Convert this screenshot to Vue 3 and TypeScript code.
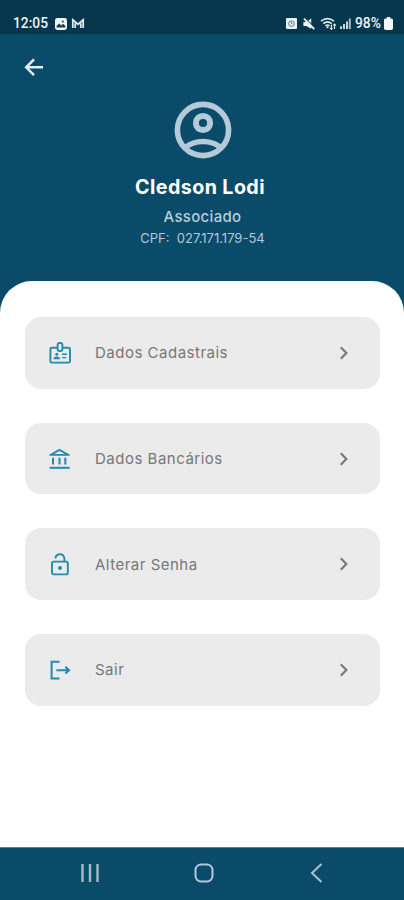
<script setup lang="ts">
type IconName = 'badge' | 'bank' | 'lock' | 'exit'

interface MenuItem {
  icon: IconName
  label: string
}

const items: MenuItem[] = [
  { icon: 'badge', label: 'Dados Cadastrais' },
  { icon: 'bank', label: 'Dados Bancários' },
  { icon: 'lock', label: 'Alterar Senha' },
  { icon: 'exit', label: 'Sair' },
]
</script>

<template>
  <div class="screen">
    <div class="status">
      <div class="status-left">
        <span class="time">12:05</span>
        <svg class="ic-image" viewBox="0 0 12 12" width="12" height="12">
          <rect width="12" height="12" rx="2.4" fill="#eef4f8" />
          <path d="M1.6 9.6V8l2.6-2.4 2 1.8 1.8-1.6 2.4 2.2v1.6z" fill="#153b50" />
          <circle cx="7.8" cy="3.4" r="1" fill="#153b50" />
        </svg>
        <svg class="ic-mail" viewBox="0 0 14 11" width="14" height="11">
          <path d="M1.8 10V1.8L7 6.2l5.2-4.4V10M4.2 10V5.2M9.8 10V5.2" fill="none" stroke="#dce7ee" stroke-width="1.8" />
        </svg>
      </div>
      <div class="status-right">
        <svg class="ic-alarm" viewBox="0 0 11 11" width="11" height="11">
          <rect width="11" height="11" rx="1" fill="#e9f1f5" />
          <circle cx="5.5" cy="5.7" r="2.8" fill="none" stroke="#4d6a7a" stroke-width=".9" />
          <path d="M5.5 4.2v1.7h1.2" fill="none" stroke="#4d6a7a" stroke-width=".8" />
        </svg>
        <svg class="ic-mute" viewBox="0 0 12 12" width="12" height="12">
          <path d="M.4 4h2.900L8.200.6v10.200L3.300 8H.4z" fill="#eef4f8" />
          <path d="M2.800.9l9 9" stroke="#06364b" stroke-width="1.100" />
          <path d="M1 .7l10.300 10.400" stroke="#eef4f8" stroke-width="1.900" />
        </svg>
        <svg class="ic-wifi" viewBox="0 0 17 13" width="17" height="13">
          <path d="M1 4.200Q7.500-1 14 4.200M3.200 6.600q4.300-3.400 8.600 0M5.400 8.800q2.100-1.600 4.200 0" fill="none" stroke="#dce7ee" stroke-width="1.600" />
          <circle cx="7.500" cy="10.200" r="1.100" fill="#dce7ee" />
          <path d="M11.500 7.500v4.800M10 10.800l1.500 1.500 1-1M14.500 12V7M13.400 8.400l1.100-1.200 1.300 1.300" fill="none" stroke="#dce7ee" stroke-width="1.200" />
        </svg>
        <svg class="ic-signal" viewBox="0 0 11 11" width="11" height="11">
          <path d="M1 11V8.300M4 11V6M7 11V3.500" stroke="#c9d6de" stroke-width="2" />
          <path d="M9.800 11V.5" stroke="#a8bac5" stroke-width="2" />
        </svg>
        <span class="pct">98%</span>
        <svg class="ic-bat" viewBox="0 0 9 13" width="9" height="13">
          <path d="M2.800 0h3.400v1.500H7.600Q9 1.500 9 3v8.300Q9 13 7.400 13H1.600Q0 13 0 11.300V3q0-1.500 1.400-1.500h1.400z" fill="#f4f8fa" />
        </svg>
      </div>
    </div>

    <header class="header">
      <svg class="back" viewBox="0 0 20 20" width="20" height="20">
        <path d="M19 10.300H2.800M10 2.400L2.200 10.300 10 18.200" fill="none" stroke="#e6f0f7" stroke-width="2.500" />
      </svg>
      <svg class="avatar" viewBox="0 0 58 58" width="58" height="58">
        <g fill="none" stroke="#b4cad8">
          <circle cx="29" cy="29" r="25.600" stroke-width="5.600" />
          <circle cx="29" cy="22" r="7.100" stroke-width="6" />
          <path d="M11 46.500Q19 40.500 29 40.500T47 46.500" stroke-width="5.400" />
        </g>
      </svg>
      <h1 class="name">Cledson Lodi</h1>
      <p class="role">Associado</p>
      <p class="cpf">CPF:&nbsp; 027.171.179-54</p>
    </header>

    <main class="sheet">
      <button v-for="item in items" :key="item.label" class="card" type="button">
        <svg class="icon" viewBox="0 0 24 24" width="24" height="24" fill="none" stroke="#2589b0" stroke-width="1.900">
          <template v-if="item.icon === 'badge'">
            <path d="M9.600 6.800H3.800Q2.400 6.800 2.400 8.200v12q0 1.400 1.400 1.400h16.800q1.400 0 1.400-1.400v-12q0-1.400-1.400-1.400h-6.200" />
            <rect x="9.600" y="2" width="4.800" height="8" rx="2" />
            <circle cx="8.800" cy="13.200" r="1.500" fill="#2589b0" stroke="none" />
            <path d="M5.600 18.200q0-2.600 3.200-2.600t3.200 2.600z" fill="#2589b0" stroke="none" />
            <path d="M14 13.300h5M14 16.600h4.200" stroke-width="1.400" />
          </template>
          <template v-else-if="item.icon === 'bank'">
            <path d="M1.400 8.800V7.500L11.500 1.800 21.600 7.500v1.300zM6.200 7.100h10.600L11.500 4z" fill="#2589b0" fill-rule="evenodd" stroke="none" />
            <path d="M5 10.800v6.800M11.500 10.800v6.800M17.300 10.800v6.800" stroke-width="2" />
            <path d="M1.600 20.800h20" stroke-width="2" />
          </template>
          <template v-else-if="item.icon === 'lock'">
            <rect x="4" y="9.600" width="15.800" height="12.800" rx="1.700" />
            <path d="M7.500 6.600V6Q8 2.200 11.900 2.200T16.400 6.500v3" />
            <circle cx="12" cy="16" r="2" fill="#2589b0" stroke="none" />
          </template>
          <template v-else>
            <path d="M11.500 3.800H3.600v16.800h7.900" stroke-width="2" />
            <path d="M8.400 12.200h12M17.400 8.800l3.500 3.400-3.500 3.400" stroke-width="2.100" />
          </template>
        </svg>
        <span class="label">{{ item.label }}</span>
        <svg class="chev" viewBox="0 0 10 14" width="10" height="14">
          <path d="M1.800 1.300L7.400 7l-5.600 5.700" fill="none" stroke="#777" stroke-width="2.100" />
        </svg>
      </button>
    </main>

    <nav class="nav">
      <svg viewBox="0 0 20 20" width="20" height="20">
        <path d="M2.500 1v18M10 1v18M17.500 1v18" stroke="#a3bac9" stroke-width="2.400" />
      </svg>
      <svg viewBox="0 0 20 20" width="20" height="20">
        <rect x="1.500" y="1.500" width="17" height="17" rx="5.500" fill="none" stroke="#b3c7df" stroke-width="2" />
      </svg>
      <svg viewBox="0 0 20 20" width="20" height="20">
        <path d="M14.500 1L5 10l9.500 9" fill="none" stroke="#a9c0d6" stroke-width="2" />
      </svg>
    </nav>
  </div>
</template>

<style>
body {
  margin: 0;
}
</style>

<style scoped>
.screen {
  width: 404px;
  height: 900px;
  display: flex;
  flex-direction: column;
  overflow: hidden;
  background: #0a4b6a;
  font-family: Inter, "Liberation Sans", sans-serif;
}
svg {
  display: block;
  flex: none;
}
.status {
  box-sizing: border-box;
  height: 34px;
  padding: 13px 11px 0 13px;
  display: flex;
  justify-content: space-between;
  background: #06364b;
  color: #eef4f8;
  font: 500 13.8px/21px Roboto, sans-serif;
}
.status-left,
.status-right {
  display: flex;
  align-items: center;
  height: 21px;
}
.time {
  width: 42px;
}
.ic-mail {
  margin-left: 4px;
}
.ic-mute {
  margin-left: 6px;
}
.ic-wifi {
  margin-left: 5px;
}
.ic-signal {
  margin-left: 3px;
}
.pct {
  margin-left: 4px;
  width: 28px;
  white-space: nowrap;
}
.ic-bat {
  margin-left: 1px;
}
.header {
  height: 246.500px;
  display: flex;
  flex-direction: column;
  align-items: center;
  color: #fff;
}
.back {
  align-self: flex-start;
  margin: 23px 0 0 24px;
}
.avatar {
  margin-top: 24px;
  padding-left: 1px;
}
h1,
p {
  margin: 0;
  white-space: nowrap;
}
.name {
  margin-top: 14px;
  padding-right: 4px;
  font-size: 19.700px;
  line-height: 28px;
  font-weight: 700;
  letter-spacing: 0.400px;
}
.role {
  margin-top: 6px;
  padding-left: 1px;
  color: #b7cedb;
  font-size: 15px;
  line-height: 20px;
  font-weight: 500;
  letter-spacing: 0.300px;
}
.cpf {
  margin-top: 2px;
  padding-left: 1px;
  color: #b0c8d6;
  font-size: 13px;
  line-height: 18px;
}
.sheet {
  box-sizing: border-box;
  flex: 1;
  padding: 36.500px 24px 0 25px;
  display: flex;
  flex-direction: column;
  gap: 34px;
  background: #fff;
  border-radius: 32px 32px 0 0;
}
.card {
  box-sizing: border-box;
  height: 71.700px;
  padding: 0 31px 0 23px;
  display: flex;
  align-items: center;
  border: 0;
  border-radius: 16px;
  background: #ebebeb;
  color: #777;
  font: 400 15px/22px Inter, "Liberation Sans", sans-serif;
}
.label {
  padding-top: 1px;
  margin-left: 23px;
  letter-spacing: 0.500px;
  white-space: nowrap;
}
.chev {
  margin-left: auto;
}
.nav {
  box-sizing: border-box;
  height: 53px;
  padding: 0 77px 2px 80px;
  display: flex;
  align-items: center;
  justify-content: space-between;
  border-top: 1px solid #587d91;
  background: #0a4b6a;
}
</style>
